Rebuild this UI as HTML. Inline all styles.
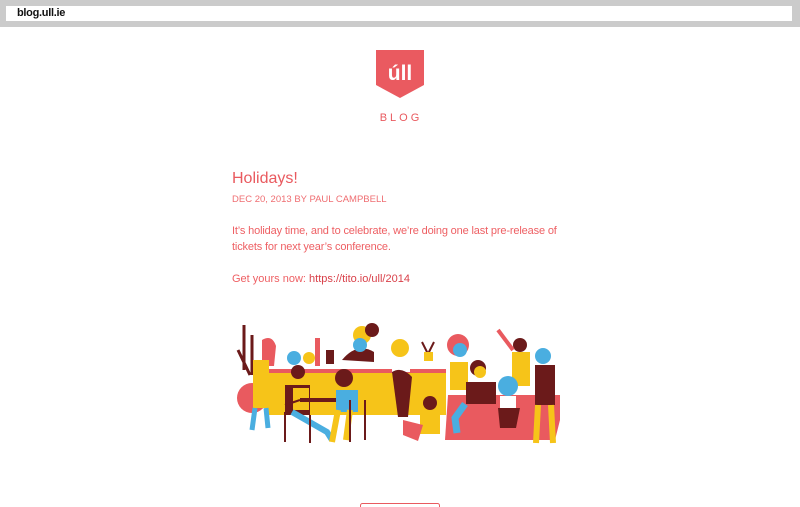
<!DOCTYPE html>
<html><head><meta charset="utf-8"><style>
html,body{margin:0;padding:0;background:#fff;width:800px;height:507px;overflow:hidden;font-family:"Liberation Sans",sans-serif}
.bar{position:absolute;left:0;top:0;width:800px;height:27px;background:#cbcbcb}
.url{position:absolute;left:6px;top:6px;width:786px;height:15px;background:#fff;font-size:11px;font-weight:bold;line-height:15px;color:#111;padding-left:11px;box-sizing:border-box;letter-spacing:-0.3px}
.c{position:absolute;color:#e95a5f}
</style></head><body>
<div class="bar"><div class="url">blog.ull.ie</div></div>
<svg style="position:absolute;left:0;top:0" width="800" height="507">
<path d="M376 50 H424 V85 L400 98 L376 85 Z" fill="#ea5a60"/>
<text x="400" y="80" font-size="21" font-weight="bold" fill="#fff" text-anchor="middle" font-family="Liberation Sans">úll</text>
<text x="401" y="121" font-size="11" fill="#e95a5f" text-anchor="middle" letter-spacing="3" font-family="Liberation Sans">BLOG</text>
<g>
<rect x="268" y="372" width="178" height="43" fill="#f6c419"/>
<rect x="268" y="369" width="178" height="4" fill="#e95a5f"/>
<circle cx="252" cy="398" r="15" fill="#e95a5f"/>
<path d="M244 325 v45 M252 335 v40 M238 350 l12 25" stroke="#6b1a1a" stroke-width="3"/>
<path d="M262 340 q10-6 14 6 l-2 20 h-12 z" fill="#e95a5f"/>
<rect x="253" y="360" width="16" height="48" fill="#f6c419"/>
<path d="M255 408 l-3 22 M266 408 l2 20" stroke="#4aaee0" stroke-width="5"/>
<circle cx="294" cy="358" r="7" fill="#4aaee0"/><circle cx="309" cy="358" r="6" fill="#f6c419"/>
<rect x="315" y="338" width="5" height="28" fill="#e95a5f"/><rect x="326" y="350" width="8" height="14" fill="#6b1a1a"/>
<circle cx="362" cy="335" r="9" fill="#f6c419"/><path d="M342 360 q15-18 32-8 v10 z" fill="#6b1a1a"/><circle cx="360" cy="345" r="7" fill="#4aaee0"/>
<circle cx="372" cy="330" r="7" fill="#6b1a1a"/>
<circle cx="298" cy="372" r="7" fill="#6b1a1a"/>
<path d="M285 385 h25 v30 h-25 z" fill="#6b1a1a"/>
<path d="M293 388 h16 v22 h-16z" fill="#f6c419"/>
<path d="M292 412 l35 20 l5 8" stroke="#4aaee0" stroke-width="6" fill="none"/>
<path d="M285 412 v30 M310 415 v28 M300 400 l-15 5" stroke="#6b1a1a" stroke-width="2"/>
<rect x="300" y="398" width="40" height="4" fill="#6b1a1a"/>
<circle cx="344" cy="378" r="9" fill="#6b1a1a"/>
<path d="M336 390 h22 v22 h-22z" fill="#4aaee0"/>
<path d="M338 410 l-6 32 M350 410 l-4 30" stroke="#f6c419" stroke-width="6"/>
<path d="M350 400 v42 M365 400 v40" stroke="#6b1a1a" stroke-width="2"/>
<circle cx="400" cy="348" r="9" fill="#f6c419"/>
<path d="M392 360 h18 v12 h-18z" fill="#fff"/>
<path d="M392 372 q10-6 20 5 l-4 40 h-10z" fill="#6b1a1a"/>
<path d="M422 342 l6 12 l6 -12" stroke="#6b1a1a" stroke-width="2" fill="none"/><rect x="424" y="352" width="9" height="9" fill="#f6c419"/>
<circle cx="430" cy="403" r="7" fill="#6b1a1a"/>
<path d="M420 412 h20 v22 h-20z" fill="#f6c419"/>
<path d="M403 420 l20 5 l-5 16 l-15-6z" fill="#e95a5f"/>
<path d="M448 395 h112 v25 l-5 20 h-110 z" fill="#e95a5f"/>
<circle cx="458" cy="345" r="11" fill="#e95a5f"/><circle cx="460" cy="350" r="7" fill="#4aaee0"/>
<path d="M450 362 h18 v28 h-18z" fill="#f6c419"/>
<circle cx="478" cy="368" r="8" fill="#6b1a1a"/><circle cx="480" cy="372" r="6" fill="#f6c419"/>
<path d="M466 382 h30 v22 h-30z" fill="#6b1a1a"/>
<path d="M465 404 l-10 14 l2 15" stroke="#4aaee0" stroke-width="7" fill="none"/>
<circle cx="520" cy="345" r="7" fill="#6b1a1a"/><path d="M512 352 h18 v34 h-18z" fill="#f6c419"/><path d="M513 350 l-15-20" stroke="#e95a5f" stroke-width="4"/>
<circle cx="508" cy="386" r="10" fill="#4aaee0"/><path d="M500 396 h16 v12 h-16z" fill="#fff"/><path d="M498 408 h22 l-4 20 h-16z" fill="#6b1a1a"/>
<circle cx="543" cy="356" r="8" fill="#4aaee0"/><path d="M535 365 h20 v40 h-20z" fill="#6b1a1a"/>
<path d="M538 405 l-2 38 M551 405 l2 38" stroke="#f6c419" stroke-width="6"/>
</g>
<rect x="360.5" y="503.5" width="79" height="10" rx="2" fill="none" stroke="#e95a5f"/>
</svg>
<div class="c" style="left:232px;top:170px;font-size:16px">Holidays!</div>
<div class="c" style="left:232px;top:194px;font-size:9.5px;color:#ef6e72">DEC 20, 2013 BY PAUL CAMPBELL</div>
<div class="c" style="left:232px;top:223px;font-size:11px;line-height:16px;width:345px;color:#ee5f63;letter-spacing:-0.15px">It’s holiday time, and to celebrate, we’re doing one last pre-release of tickets for next year’s conference.</div>
<div class="c" style="left:232px;top:271px;font-size:11px;line-height:16px;color:#ee5f63">Get yours now: <span style="color:#d9414a">https://tito.io/ull/2014</span></div>
</body></html>
